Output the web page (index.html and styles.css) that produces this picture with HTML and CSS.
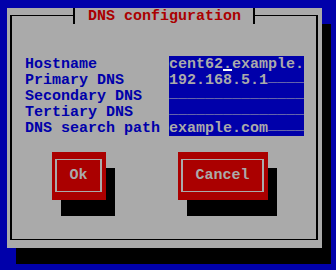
FILE: index.html
```html
<!DOCTYPE html>
<html>
<head>
    <title>DNS configuration</title>
    <link rel="stylesheet" href="styles.css">
</head>
<body>
    <div class="screen">
        <div class="dialog">
            <div class="title">
                <span class="tee tee-left"></span>
                <span class="title-text">&nbsp;DNS configuration&nbsp;</span>
                <span class="tee tee-right"></span>
            </div>
            <div class="frame">
                <div class="form">
                    <div class="label">Hostname</div>
                    <div class="field">cent62<span class="cursor">.</span>example.</div>
                    <div class="label">Primary DNS</div>
                    <div class="field">192.168.5.1<span class="blank">____</span></div>
                    <div class="label">Secondary DNS</div>
                    <div class="field"><span class="blank">_______________</span></div>
                    <div class="label">Tertiary DNS</div>
                    <div class="field"><span class="blank">_______________</span></div>
                    <div class="label">DNS search path</div>
                    <div class="field">example.com<span class="blank">____</span></div>
                </div>
                <div class="buttons">
                    <button class="btn btn-ok"><span class="btn-frame">Ok</span></button>
                    <button class="btn btn-cancel"><span class="btn-frame">Cancel</span></button>
                </div>
            </div>
        </div>
    </div>
</body>
</html>
```

FILE: styles.css
```css
body {
    margin: 0;
    padding: 0;
    background-color: #0000aa; /* text console blue */
    font-family: "Liberation Mono", "DejaVu Sans Mono", monospace;
    font-size: 15px;
    font-weight: bold;
    line-height: 16px;
}

.screen {
    height: 270px;
    padding: 8px 0 0 7px;
    box-sizing: border-box;
    overflow: hidden;
}

.dialog {
    position: relative;
    display: flow-root;
    width: 315px;
    height: 240px;
    background-color: #aaaaaa;
    box-shadow: 9px 16px 0 #000;
}

/* single line box, like the console line drawing chars */
.frame {
    height: 225px;
    margin: 7px 4px 8px 3px;
    border: 1px solid #000;
    border-left-width: 2px;
    border-right-width: 2px;
    box-sizing: border-box;
}

.title {
    position: absolute;
    left: 63px;
    top: 0;
    height: 16px;
    display: flex;
    background-color: #aaaaaa;
}

.title-text {
    color: #aa0000;
    white-space: pre;
    height: 16px;
    padding-top: 2px;
    line-height: 14px;
    box-sizing: border-box;
}

.tee {
    width: 9px;
    height: 16px;
}

.tee-left {
    background: linear-gradient(#000, #000) 3px 0 / 2px 16px no-repeat,
                linear-gradient(#000, #000) 0 7px / 5px 1px no-repeat;
}

.tee-right {
    background: linear-gradient(#000, #000) 3px 0 / 2px 16px no-repeat,
                linear-gradient(#000, #000) 3px 7px / 6px 1px no-repeat;
}

.form {
    display: grid;
    grid-template-columns: 144px 135px;
    grid-auto-rows: 16px;
    padding: 40px 0 0 13px;
}

.label,
.field {
    height: 16px;
    padding-top: 2px;
    line-height: 14px;
    box-sizing: border-box;
    white-space: pre;
}

.label {
    color: #0000aa;
}

.field {
    background-color: #0000aa;
    color: #aaaaaa;
    overflow: hidden;
}

/* empty part of an entry, underscores sit a little higher on the console */
.blank {
    display: inline-block;
    transform: translateY(-3px);
}

.cursor {
    text-decoration: underline;
    text-decoration-color: #ffffff;
    text-decoration-thickness: 2px;
    text-underline-offset: 1px;
}

.buttons {
    display: flex;
    gap: 72px;
    margin-top: 16px;
    padding-left: 40px;
}

.btn {
    display: block;
    height: 48px;
    padding: 0;
    border: none;
    background-color: #aa0000;
    color: #aaaaaa;
    font: inherit;
    box-shadow: 9px 16px 0 #000;
}

.btn-ok {
    width: 54px;
}

.btn-cancel {
    width: 90px;
}

.btn-frame {
    display: flex;
    align-items: center;
    justify-content: center;
    height: 33px;
    margin: 7px 4px 8px 3px;
    padding-top: 1px;
    border: 1px solid #aaaaaa;
    border-left-width: 2px;
    border-right-width: 2px;
    box-sizing: border-box;
}
```
